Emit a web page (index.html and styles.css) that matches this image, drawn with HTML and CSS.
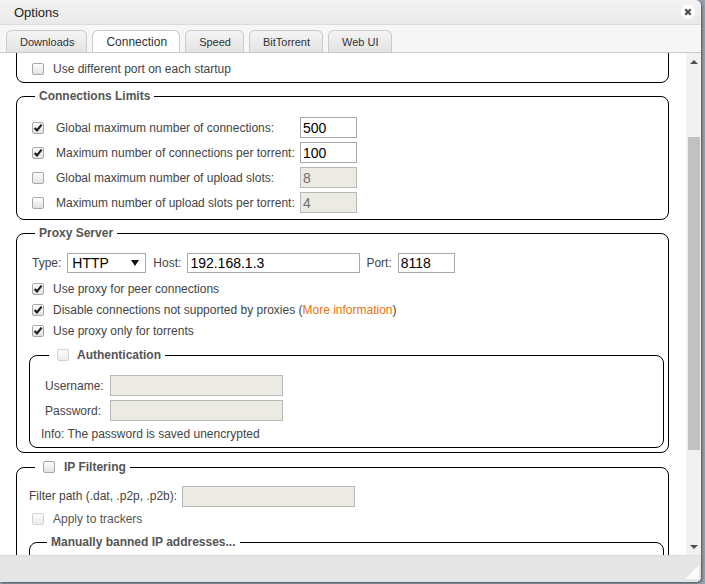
FILE: index.html
```html
<!DOCTYPE html>
<html lang="en">
<head>
    <meta charset="UTF-8">
    <title>Options</title>
    <link rel="stylesheet" href="styles.css">
</head>
<body>
    <div class="dialog">
        <div class="titlebar">
            <span class="title">Options</span>
            <span class="close">
                <svg width="14" height="14" viewBox="0 0 14 14"><circle cx="7" cy="7" r="7" fill="#fff"/><path d="M4.3 4.3 L9.7 9.7 M9.7 4.3 L4.3 9.7" stroke="#4a4a4a" stroke-width="2.2"/></svg>
            </span>
        </div>
        <div class="tabs">
            <span class="tab">Downloads</span>
            <span class="tab active">Connection</span>
            <span class="tab">Speed</span>
            <span class="tab">BitTorrent</span>
            <span class="tab">Web UI</span>
        </div>

        <div class="content">
            <div class="pane">
                <!-- listening port (scrolled out of view) -->
                <fieldset class="box cut">
                    <div class="check"><span class="cb"></span>Use different port on each startup</div>
                </fieldset>

                <fieldset class="box">
                    <legend>Connections Limits</legend>
                    <div class="limits">
                        <span class="cb on"><svg viewBox="0 0 10 10"><path d="M1.6 5 L4 7.4 L8.6 1.6" /></svg></span>
                        <span>Global maximum number of connections:</span>
                        <input class="field" type="text" value="500">

                        <span class="cb on"><svg viewBox="0 0 10 10"><path d="M1.6 5 L4 7.4 L8.6 1.6" /></svg></span>
                        <span>Maximum number of connections per torrent:</span>
                        <input class="field" type="text" value="100">

                        <span class="cb"></span>
                        <span>Global maximum number of upload slots:</span>
                        <input class="field" type="text" value="8" disabled>

                        <span class="cb"></span>
                        <span>Maximum number of upload slots per torrent:</span>
                        <input class="field" type="text" value="4" disabled>
                    </div>
                </fieldset>

                <fieldset class="box proxy">
                    <legend>Proxy Server</legend>
                    <div class="proxy-row">
                        <span>Type:</span>
                        <span class="select">HTTP<span class="arrow"></span></span>
                        <span>Host:</span>
                        <input class="field host" type="text" value="192.168.1.3">
                        <span>Port:</span>
                        <input class="field" type="text" value="8118">
                    </div>
                    <div class="checks">
                        <div class="check"><span class="cb on"><svg viewBox="0 0 10 10"><path d="M1.6 5 L4 7.4 L8.6 1.6" /></svg></span>Use proxy for peer connections</div>
                        <div class="check"><span class="cb on"><svg viewBox="0 0 10 10"><path d="M1.6 5 L4 7.4 L8.6 1.6" /></svg></span>Disable connections not supported by proxies (<a href="#">More information</a>)</div>
                        <div class="check"><span class="cb on"><svg viewBox="0 0 10 10"><path d="M1.6 5 L4 7.4 L8.6 1.6" /></svg></span>Use proxy only for torrents</div>
                    </div>

                    <fieldset class="box inner auth">
                        <legend><span class="cb dim"></span>Authentication</legend>
                        <div class="login">
                            <span class="lbl">Username:</span>
                            <input class="field wide" type="text" disabled>
                            <span class="lbl">Password:</span>
                            <input class="field wide" type="password" disabled>
                        </div>
                        <div class="info">Info: The password is saved unencrypted</div>
                    </fieldset>
                </fieldset>

                <fieldset class="box ipfilter">
                    <legend><span class="cb"></span>IP Filtering</legend>
                    <div class="filter-row">
                        <span>Filter path (.dat, .p2p, .p2b):</span>
                        <input class="field wide" type="text" disabled>
                    </div>
                    <div class="check dimmed"><span class="cb dim"></span>Apply to trackers</div>

                    <fieldset class="box inner banned">
                        <legend>Manually banned IP addresses...</legend>
                        <div class="banned-list"></div>
                    </fieldset>
                </fieldset>
            </div>

            <div class="scrollbar">
                <span class="sb-btn"><span class="tri up"></span></span>
                <div class="track"><div class="thumb"></div></div>
                <span class="sb-btn"><span class="tri down"></span></span>
            </div>
        </div>

        <div class="footer">
            <svg class="grip" width="14" height="14" viewBox="0 0 14 14"><polygon points="14,0 14,14 0,14" fill="#fbfbfb"/></svg>
        </div>
    </div>
</body>
</html>
```

FILE: styles.css
```css
body {
    margin: 0;
    height: 584px;
    background: #9aa3ad;
    font-family: "Liberation Sans", Arial, sans-serif;
    font-size: 12px;
    color: #444;
    overflow: hidden;
}

.dialog {
    width: 701px;
    height: 582px;
    background: #fff;
    border-radius: 0 6px 5px 0;
    box-shadow: 1px 1px 3px rgba(0, 0, 0, 0.55);
    display: flex;
    flex-direction: column;
    overflow: hidden;
}

/* title bar */
.titlebar {
    height: 25px;
    flex: none;
    display: flex;
    align-items: center;
    justify-content: space-between;
    padding: 0 6px 0 14px;
    background: linear-gradient(#f3f3f3, #e9e9e9);
    border-bottom: 1px solid #dcdcdc;
    box-sizing: border-box;
}

.title {
    font-size: 13px;
    color: #222;
}

.close svg {
    display: block;
}

/* tabs */
.tabs {
    height: 28px;
    flex: none;
    display: flex;
    align-items: flex-end;
    padding-left: 6px;
    background: #f6f6f6;
    border-bottom: 1px solid #c9c9c9;
    box-sizing: border-box;
}

.tab {
    height: 22px;
    margin-right: 5px;
    padding: 0 12px 0 13px;
    display: flex;
    align-items: center;
    box-sizing: border-box;
    border: 1px solid #cbcbcb;
    border-bottom: none;
    border-radius: 6px 6px 0 0;
    background: linear-gradient(#f4f4f4, #e3e3e3);
    font-size: 11px;
    color: #333;
}

.tab.active {
    background: #fff;
    font-size: 12px;
}

/* scrolled content */
.content {
    flex: 1;
    display: flex;
    min-height: 0;
}

.pane {
    flex: 1;
    overflow: hidden;
}

.box {
    margin: 6px 17px 0 16px;
    padding: 12px 4px 4px 12px;
    border: 1px solid #000;
    border-radius: 8px;
    min-width: 0;
}

.box legend {
    height: 14px;
    line-height: 14px;
    margin-left: 6px;
    padding: 0 4px;
    font-weight: bold;
    color: #555;
    display: flex;
    align-items: center;
}

.box legend .cb {
    margin: 0 9px 0 4px;
}

.box.cut {
    margin-top: -20px;
    padding-top: 24px;
    padding-bottom: 3px;
}

.box.proxy {
    padding-bottom: 0;
}

.check {
    height: 21px;
    display: flex;
    align-items: center;
    white-space: nowrap;
}

.check .cb {
    margin: 0 9px 0 3px;
}

.check a {
    color: #e8740c;
    text-decoration: none;
}

.cb {
    display: inline-block;
    flex: none;
    width: 12px;
    height: 12px;
    box-sizing: border-box;
    border: 1px solid #a8a8a8;
    border-radius: 2px;
    background: linear-gradient(#fdfdfd, #e2e2e2);
}

.cb svg {
    display: block;
    width: 10px;
    height: 10px;
}

.cb svg path {
    fill: none;
    stroke: #1e1e1e;
    stroke-width: 2.2;
}

.cb.dim {
    border-color: #d2d2d2;
    background: linear-gradient(#fbfbfb, #ececec);
}

.dimmed {
    color: #555;
}

/* inputs */
.field {
    width: 57px;
    height: 21px;
    box-sizing: border-box;
    margin: 0;
    padding: 0 2px;
    border: 1px solid #a9a9a9;
    font-family: "Liberation Sans", Arial, sans-serif;
    font-size: 14px;
    color: #000;
    background: #fff;
}

.field:disabled {
    background: #ebebe4;
    color: #6d6d6d;
    border-color: #b8b8b8;
}

.field.wide,
.field.host {
    width: 173px;
}

/* connections limits */
.limits {
    margin-left: 3px;
    display: grid;
    grid-template-columns: 15px 235px 57px;
    grid-auto-rows: 25px;
    column-gap: 9px;
    align-items: center;
    white-space: nowrap;
}

/* proxy */
.proxy-row {
    height: 22px;
    margin-left: 3px;
    display: flex;
    align-items: center;
    gap: 6px;
}

.proxy-row .field {
    height: 20px;
}

.select {
    width: 79px;
    height: 20px;
    box-sizing: border-box;
    margin-right: 1px;
    padding: 0 6px 0 4px;
    border: 1px solid #a9a9a9;
    display: flex;
    align-items: center;
    justify-content: space-between;
    font-size: 14px;
    color: #000;
}

.select .arrow {
    width: 0;
    height: 0;
    border-left: 4px solid transparent;
    border-right: 4px solid transparent;
    border-top: 6px solid #111;
}

.checks {
    margin-top: 4px;
}

.box.inner {
    margin: 7px 0 4px 0;
    padding: 11px 11px 6px 11px;
}

.box.auth legend {
    margin-left: 8px;
}

.box.auth legend .cb {
    margin-right: 8px;
}

.login {
    display: grid;
    grid-template-columns: 65px 173px;
    grid-auto-rows: 25px;
    column-gap: 4px;
    align-items: center;
}

.lbl {
    padding-left: 4px;
}

.info {
    margin-top: 4px;
    height: 14px;
    line-height: 14px;
}

/* ip filtering */
.box.ipfilter {
    margin-top: 7px;
    padding-top: 11px;
}

.filter-row {
    height: 22px;
    display: flex;
    align-items: center;
    gap: 5px;
}

.ipfilter .check {
    margin-top: 1px;
}

.box.inner.banned {
    margin-top: 6px;
    padding-top: 10px;
}

.banned-list {
    height: 120px;
}

/* scrollbar */
.scrollbar {
    width: 15px;
    flex: none;
    background: #f1f1f1;
    display: flex;
    flex-direction: column;
}

.sb-btn {
    height: 17px;
    flex: none;
    display: flex;
    align-items: center;
    justify-content: center;
}

.track {
    flex: 1;
    padding: 67px 1px 0 2px;
}

.thumb {
    height: 313px;
    background: #c1c1c1;
}

.tri {
    width: 0;
    height: 0;
    border-left: 4px solid transparent;
    border-right: 4px solid transparent;
}

.tri.up {
    border-bottom: 4px solid #505050;
}

.tri.down {
    border-top: 4px solid #505050;
}

/* footer */
.footer {
    height: 27px;
    flex: none;
    background: #e5e5e5;
    border-top: 1px solid #dadada;
    display: flex;
    justify-content: flex-end;
    align-items: flex-end;
    padding: 0 2px 3px 0;
    box-sizing: border-box;
}
```
